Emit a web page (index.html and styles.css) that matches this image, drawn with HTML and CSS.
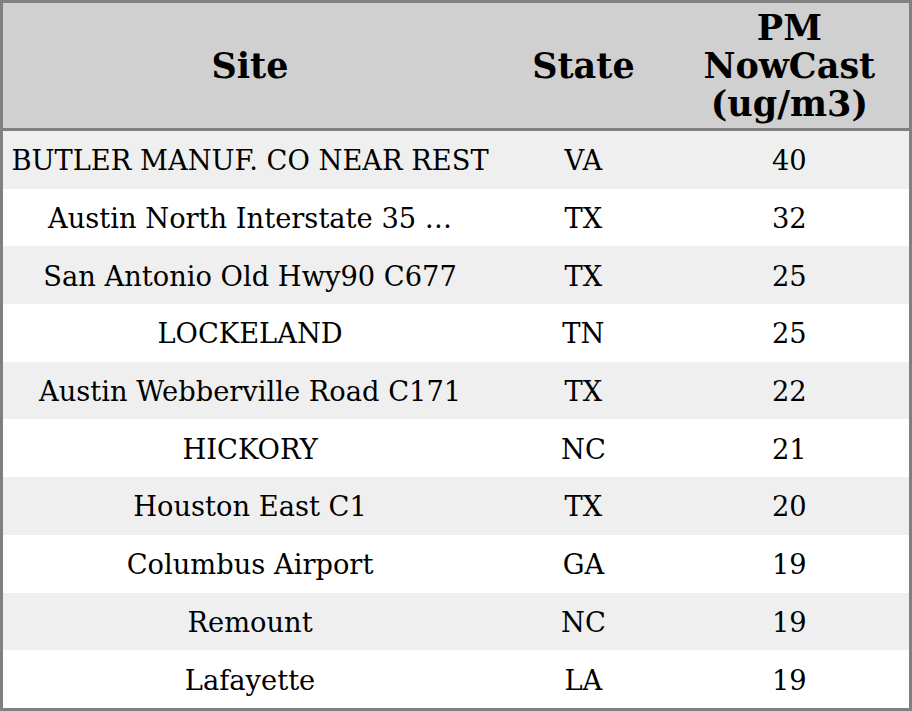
FILE: index.html
```html
<!DOCTYPE html>
<html>
<head>
<meta charset="utf-8">
<link rel="stylesheet" href="styles.css">
</head>
<body>
<table class="aq">
  <colgroup>
    <col class="c-site">
    <col class="c-state">
    <col class="c-pm">
  </colgroup>
  <thead>
    <tr><th>Site</th><th>State</th><th>PM<br>NowCast<br>(ug/m3)</th></tr>
  </thead>
  <tbody>
    <tr><td>BUTLER MANUF. CO NEAR REST</td><td>VA</td><td>40</td></tr>
    <tr><td>Austin North Interstate 35 …</td><td>TX</td><td>32</td></tr>
    <tr><td>San Antonio Old Hwy90 C677</td><td>TX</td><td>25</td></tr>
    <tr><td>LOCKELAND</td><td>TN</td><td>25</td></tr>
    <tr><td>Austin Webberville Road C171</td><td>TX</td><td>22</td></tr>
    <tr><td>HICKORY</td><td>NC</td><td>21</td></tr>
    <tr><td>Houston East C1</td><td>TX</td><td>20</td></tr>
    <tr><td>Columbus Airport</td><td>GA</td><td>19</td></tr>
    <tr><td>Remount</td><td>NC</td><td>19</td></tr>
    <tr><td>Lafayette</td><td>LA</td><td>19</td></tr>
  </tbody>
</table>
</body>
</html>
```
FILE: styles.css
```css
html, body {
  margin: 0;
  padding: 0;
  background: #ffffff;
}
.aq {
  width: 912px;
  height: 711px;
  border-collapse: collapse;
  table-layout: fixed;
  border: 3px solid #808080;
  font-family: "DejaVu Serif", serif;
  color: #000;
}
.c-site { width: 494px; }
.c-state { width: 172px; }
.c-pm { width: 240px; }
.aq th {
  background: #d0d0d0;
  font-size: 35px;
  font-weight: bold;
  line-height: 38px;
  height: 125px;
  padding: 0;
  text-align: center;
  vertical-align: middle;
  border-bottom: 3px solid #808080;
}
.aq td {
  font-size: 27.3px;
  line-height: 30px;
  text-align: center;
  vertical-align: middle;
  padding: 3px 0 0 0;
  height: 54px;
  white-space: nowrap;
}
.aq tbody tr:nth-child(odd) td { background: #efefef; }
.aq tbody tr:nth-child(even) td { background: #ffffff; }
```
